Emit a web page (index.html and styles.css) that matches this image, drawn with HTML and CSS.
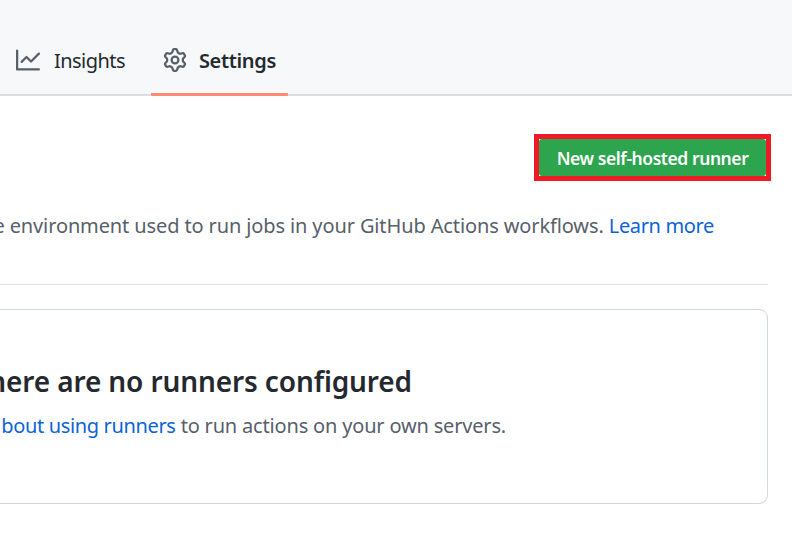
FILE: index.html
```html
<!DOCTYPE html>
<html lang="en">
<head>
<meta charset="utf-8">
<title>Runners</title>
<link rel="stylesheet" href="styles.css">
</head>
<body>
<nav class="tabs">
  <a class="tab">
    <svg class="icon graph" viewBox="0 0 16 16"><path fill="currentColor" d="M1.5 1.75a.75.75 0 00-1.5 0v12.5c0 .414.336.75.75.75h14.5a.75.75 0 000-1.5H1.5V1.75zm14.28 2.53a.75.75 0 00-1.06-1.06L10 7.94 7.53 5.47a.75.75 0 00-1.06 0L3.22 8.72a.75.75 0 001.06 1.06L7 7.06l2.47 2.47a.75.75 0 001.06 0l5.25-5.25z"/></svg>
    <span>Insights</span>
  </a>
  <a class="tab selected">
    <svg class="icon" viewBox="0 0 16 16"><path class="gear" d="M7.429 1.525a6.593 6.593 0 011.142 0c.036.003.108.036.137.146l.289 1.105c.147.56.55.967.997 1.189.174.086.341.183.501.29.417.278.97.423 1.53.27l1.102-.303c.11-.03.175.016.195.046.219.31.41.641.573.989.014.031.022.11-.059.19l-.815.806c-.411.406-.562.957-.53 1.456a4.588 4.588 0 010 .582c-.032.499.119 1.05.53 1.456l.815.806c.08.08.073.159.059.19a6.494 6.494 0 01-.573.99c-.02.029-.086.074-.195.045l-1.103-.303c-.559-.153-1.112-.008-1.529.27-.16.107-.327.204-.5.29-.449.222-.851.628-.998 1.189l-.289 1.105c-.029.11-.101.143-.137.146a6.613 6.613 0 01-1.142 0c-.036-.003-.108-.037-.137-.146l-.289-1.105c-.147-.56-.55-.967-.997-1.189a4.502 4.502 0 01-.501-.29c-.417-.278-.97-.423-1.53-.27l-1.102.303c-.11.03-.175-.016-.195-.046a6.492 6.492 0 01-.573-.989c-.014-.031-.022-.11.059-.19l.815-.806c.411-.406.562-.957.53-1.456a4.587 4.587 0 010-.582c.032-.499-.119-1.05-.53-1.456l-.815-.806c-.08-.08-.073-.159-.059-.19a6.44 6.44 0 01.573-.99c.02-.029.086-.075.195-.045l1.103.303c.559.153 1.112.008 1.529-.27.16-.107.327-.204.5-.29.449-.222.851-.628.998-1.189l.289-1.105c.029-.11.101-.143.137-.146z"/><circle class="hub" cx="8" cy="8" r="2.25"/></svg>
    <span>Settings</span>
  </a>
</nav>
<main class="content">
  <div class="actions"><div class="highlight"><button class="new-runner">New self-hosted runner</button></div></div>
  <p class="line intro"><span>e environment used to run jobs in your GitHub Actions workflows. <a class="link">Learn more</a></span></p>
  <section class="blank">
    <h2 class="line title"><span>here are no runners configured</span></h2>
    <p class="line hint"><span><a class="link">bout using runners</a> to run actions on your own servers.</span></p>
  </section>
</main>
</body>
</html>
```
FILE: styles.css
```css
* { box-sizing: border-box; }
body {
  margin: 0;
  height: 551px;
  overflow: hidden;
  background: #fff;
  color: #57606a;
  font: 20px/30px "Noto Sans", "Open Sans", sans-serif;
}
.tabs {
  display: flex;
  height: 96px;
  padding: 25px 0 0 16px;
  gap: 26px;
  background: #f6f8fa;
  border-bottom: 2px solid #d8dee4;
}
.tab {
  display: flex;
  align-items: center;
  height: 71px;
  color: #24292f;
  letter-spacing: -0.55px;
}
.icon { width: 24px; height: 24px; margin: 0 14px 2px 0; color: #57606a; flex: none; }
.graph { margin-bottom: 1px; }
.selected {
  padding: 0 12px;
  width: 137px;
  background: linear-gradient(#fd8c73, #fd8c73) bottom / 100% 3px no-repeat;
  border-radius: 1px;
  font-weight: 600;
  letter-spacing: -0.35px;
}
.selected .icon { margin-right: 12px; }
.gear { fill: #f6f8fa; stroke: #57606a; stroke-width: 3; paint-order: stroke; }
.hub { fill: none; stroke: #57606a; stroke-width: 1.5; }
.content { padding: 38px 24px 0 0; }
.actions { display: flex; justify-content: flex-end; margin-right: -3px; }
.highlight { width: 237px; height: 47px; border: 5px solid #ed1c24; }
.new-runner {
  display: block;
  width: 100%;
  height: 37px;
  padding: 0;
  border: 0;
  border-radius: 3px;
  background: #2da44e;
  color: #fff;
  font: 600 17.5px/36px "Noto Sans", "Open Sans", sans-serif;
  letter-spacing: -0.43px;
}
.line {
  display: flex;
  justify-content: flex-end;
  margin: 0;
  overflow: hidden;
  white-space: nowrap;
}
.line span { flex: none; }
.link { color: #0b63d8; letter-spacing: -0.35px; }
.intro { height: 104px; padding: 30px 54px 0 0; border-bottom: 1px solid #d8dee4; letter-spacing: -0.12px; }
.blank {
  height: 195px;
  margin-top: 24px;
  padding-top: 51px;
  border: 1px solid #d0d7de;
  border-left: 0;
  border-radius: 0 9px 9px 0;
}
.title { padding-right: 355px; color: #24292f; font-size: 28px; line-height: 40px; font-weight: 600; letter-spacing: -0.12px; }
.hint { padding: 10px 261px 0 0; letter-spacing: -0.18px; }
```
